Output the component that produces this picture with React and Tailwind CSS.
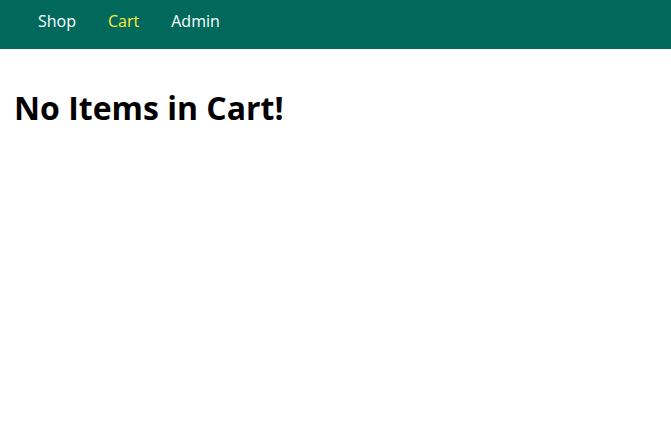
import React from 'react';

const links = [
  { label: 'Shop', active: false },
  { label: 'Cart', active: true },
  { label: 'Admin', active: false },
];

export default function App() {
  return (
    <div className="min-h-[430px] bg-white font-['Open_Sans',sans-serif]">
      <header className="h-[49px] bg-[#00695c] px-[38px] pt-[9px]">
        <nav>
          <ul className="flex gap-8 text-base leading-6">
            {links.map((l) => (
              <li key={l.label}>
                <a href="#" className={l.active ? 'text-[#ffeb3b]' : 'text-white'}>
                  {l.label}
                </a>
              </li>
            ))}
          </ul>
        </nav>
      </header>
      <main className="px-[14px] pt-[39px]">
        <h1 className="text-[32px] font-bold text-black leading-tight">No Items in Cart!</h1>
      </main>
    </div>
  );
}
